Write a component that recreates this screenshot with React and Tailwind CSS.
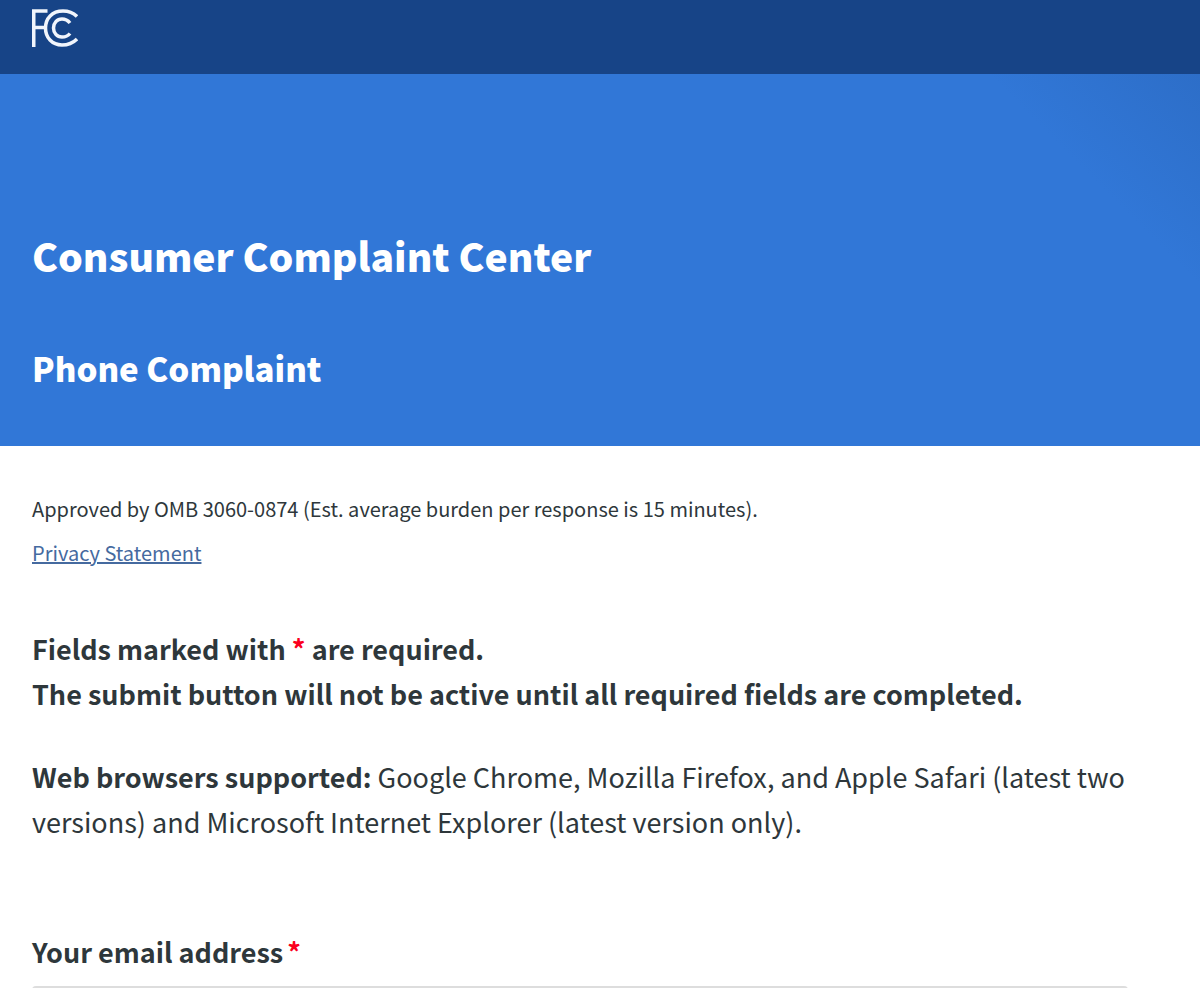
import { useState } from 'react'

function FccLogo() {
  return (
    <svg viewBox="0 0 46 38" className="h-[38px] w-[46px]" fill="none" stroke="#f1f5fc" strokeWidth="3.5" role="img" aria-label="FCC">
      {/* the F: stem, top bar and middle bar */}
      <path d="M1.750 38V2H15.500" />
      <path d="M1.750 18.500H12" />
      {/* outer and inner C */}
      <path d="M45 7.500C41 3.500 36.500 2 31 2C20 2 13.500 9.500 13.500 19S20 36 30 36C36.500 36 41 34 45 30" />
      <path d="M38 14C36 11.500 33.500 10 30 10C25 10 21.500 14 21.500 19S25 28 30 28C33.500 28 36 27 38 24.500" />
    </svg>
  )
}

function App() {
  const [email, setEmail] = useState('')

  return (
    <div className="h-screen overflow-y-auto bg-white font-['Noto_Sans_CJK_SC',sans-serif] text-[#2e373b] [scrollbar-width:none]">
      <header className="bg-[#174487] px-8 pt-[9px] pb-[27px]">
        <a href="#" className="inline-block align-top">
          <FccLogo />
        </a>
      </header>

      {/* Blue banner, gets a little darker in the top right corner */}
      <section className="bg-[#3177d7] bg-[linear-gradient(225deg,#2d6ec8_0px,#3177d7_150px)] px-8 pt-[151px] pb-[54px] text-white">
        <h1 className="text-[39px] leading-[60px] font-black">Consumer Complaint Center</h1>
        <h2 className="mt-[59px] text-[33px] leading-[48px] font-black">Phone Complaint</h2>
      </section>

      <main className="pt-[41px] pr-[72px] pl-8">
        <p className="text-[20px] leading-[44px]">
          Approved by OMB 3060-0874 (Est. average burden per response is 15 minutes).
        </p>
        <p className="text-[20px] leading-[44px]">
          <a href="#" className="text-[#456a9f] underline">Privacy Statement</a>
        </p>

        <div className="mt-[51px] text-[27px] leading-[45px]">
          <p className="font-bold">
            Fields marked with <span className="text-[#fb0020]">*</span> are required.
            <br />
            The submit button will not be active until all required fields are completed.
          </p>
          <p className="mt-[38px]">
            <strong>Web browsers supported:</strong> Google Chrome, Mozilla Firefox, and Apple Safari (latest two
            versions) and Microsoft Internet Explorer (latest version only).
          </p>
        </div>

        <form className="mt-[85px] pb-12">
          <label htmlFor="email" className="flex gap-1 text-[27px] leading-[45px] font-bold">
            Your email address
            <span className="text-[#fb0020]">*</span>
          </label>
          <input
            id="email"
            type="email"
            required
            value={email}
            onChange={(e) => setEmail(e.target.value)}
            className="mt-3 block h-16 w-full rounded border-2 border-[#dddddd] px-4 text-[27px]"
          />
        </form>
      </main>
    </div>
  )
}

export default App
